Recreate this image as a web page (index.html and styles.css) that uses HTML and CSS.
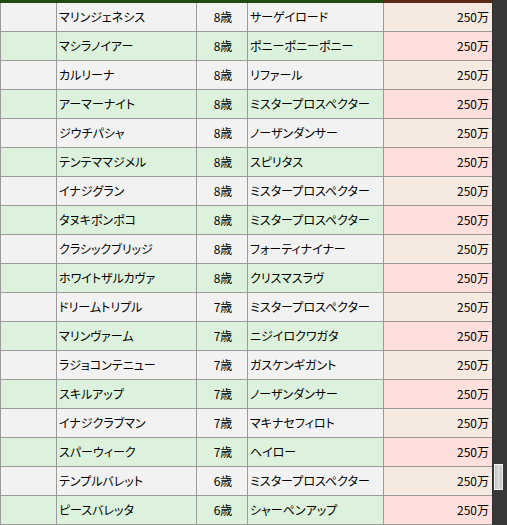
FILE: index.html
```html
<!DOCTYPE html>
<html lang="ja">
<head>
<meta charset="utf-8">
<link rel="stylesheet" href="styles.css">
</head>
<body>
<div class="frame">
  <div class="pane">
    <div class="strip"><div class="strip-main"></div><div class="strip-price"></div></div>
    <div class="grid">
      <div class="c blank w"></div><div class="c name w">マリンジェネシス</div><div class="c age w">8歳</div><div class="c sire w">サーゲイロード</div><div class="c price pw">250万</div>
      <div class="c blank g"></div><div class="c name g">マシラノイアー</div><div class="c age g">8歳</div><div class="c sire g">ポニーポニーポニー</div><div class="c price pg">250万</div>
      <div class="c blank w"></div><div class="c name w">カルリーナ</div><div class="c age w">8歳</div><div class="c sire w">リファール</div><div class="c price pw">250万</div>
      <div class="c blank g"></div><div class="c name g">アーマーナイト</div><div class="c age g">8歳</div><div class="c sire g">ミスタープロスペクター</div><div class="c price pg">250万</div>
      <div class="c blank w"></div><div class="c name w">ジウチパシャ</div><div class="c age w">8歳</div><div class="c sire w">ノーザンダンサー</div><div class="c price pw">250万</div>
      <div class="c blank g"></div><div class="c name g">テンテママジメル</div><div class="c age g">8歳</div><div class="c sire g">スピリタス</div><div class="c price pg">250万</div>
      <div class="c blank w"></div><div class="c name w">イナジグラン</div><div class="c age w">8歳</div><div class="c sire w">ミスタープロスペクター</div><div class="c price pw">250万</div>
      <div class="c blank g"></div><div class="c name g">タヌキポンポコ</div><div class="c age g">8歳</div><div class="c sire g">ミスタープロスペクター</div><div class="c price pg">250万</div>
      <div class="c blank w"></div><div class="c name w">クラシックブリッジ</div><div class="c age w">8歳</div><div class="c sire w">フォーティナイナー</div><div class="c price pw">250万</div>
      <div class="c blank g"></div><div class="c name g">ホワイトザルカヴァ</div><div class="c age g">8歳</div><div class="c sire g">クリスマスラヴ</div><div class="c price pg">250万</div>
      <div class="c blank w"></div><div class="c name w">ドリームトリプル</div><div class="c age w">7歳</div><div class="c sire w">ミスタープロスペクター</div><div class="c price pw">250万</div>
      <div class="c blank g"></div><div class="c name g">マリンヴァーム</div><div class="c age g">7歳</div><div class="c sire g">ニジイロクワガタ</div><div class="c price pg">250万</div>
      <div class="c blank w"></div><div class="c name w">ラジョコンテニュー</div><div class="c age w">7歳</div><div class="c sire w">ガスケンギガント</div><div class="c price pw">250万</div>
      <div class="c blank g"></div><div class="c name g">スキルアップ</div><div class="c age g">7歳</div><div class="c sire g">ノーザンダンサー</div><div class="c price pg">250万</div>
      <div class="c blank w"></div><div class="c name w">イナジクラブマン</div><div class="c age w">7歳</div><div class="c sire w">マキナセフィロト</div><div class="c price pw">250万</div>
      <div class="c blank g"></div><div class="c name g">スパーウィーク</div><div class="c age g">7歳</div><div class="c sire g">ヘイロー</div><div class="c price pg">250万</div>
      <div class="c blank w"></div><div class="c name w">テンプルバレット</div><div class="c age w">6歳</div><div class="c sire w">ミスタープロスペクター</div><div class="c price pw">250万</div>
      <div class="c blank g"></div><div class="c name g">ピースバレッタ</div><div class="c age g">6歳</div><div class="c sire g">シャーペンアップ</div><div class="c price pg">250万</div>
    </div>
  </div>
  <div class="scrollbar"><div class="thumb"></div></div>
</div>
</body>
</html>
```
FILE: styles.css
```css
html, body {
  margin: 0;
  padding: 0;
  background: #ffffff;
}
.frame {
  display: flex;
  width: 507px;
  height: 525px;
  overflow: hidden;
}
.pane {
  width: 492px;
  display: flex;
  flex-direction: column;
  background: #d8d8d8;
}
.strip {
  display: flex;
  height: 3px;
  flex: none;
}
.strip-main {
  width: 384px;
  background: #1f4a10;
}
.strip-price {
  flex: 1;
  background: #5a2a14;
}
.grid {
  display: grid;
  grid-template-columns: 55px 139px 50px 135px 108px;
  grid-auto-rows: 28px;
  column-gap: 1px;
  row-gap: 1px;
  padding-left: 1px;
  padding-bottom: 1px;
  background: #9a9a9a;
  border-left: 1px solid #d4d4d4;
  margin-left: -1px;
  font-family: "Noto Sans CJK JP", "DejaVu Sans", sans-serif;
  font-size: 12px;
  font-feature-settings: "palt";
  color: #000;
}
.c {
  display: flex;
  align-items: center;
  white-space: nowrap;
  overflow: hidden;
  line-height: 1;
}
.w { background: #f2f2f2; }
.g { background: #ddf2dc; }
.pw { background: #f6e9df; }
.pg { background: #ffdfdb; }
.name { padding-left: 2px; }
.sire { padding-left: 2px; }
.age { justify-content: center; padding-left: 2px; }
.price { justify-content: flex-end; padding-right: 3px; }
.scrollbar {
  width: 15px;
  background: #383838;
  border-left: 1px solid #2e2e2e;
  box-sizing: border-box;
}
.thumb {
  margin-top: 464px;
  margin-left: 1px;
  width: 9px;
  height: 26px;
  box-sizing: border-box;
  border: 1px solid #f4f4f4;
  background: linear-gradient(to right, #bdbdbd, #dcdcdc 50%, #c4c4c4);
}
```
